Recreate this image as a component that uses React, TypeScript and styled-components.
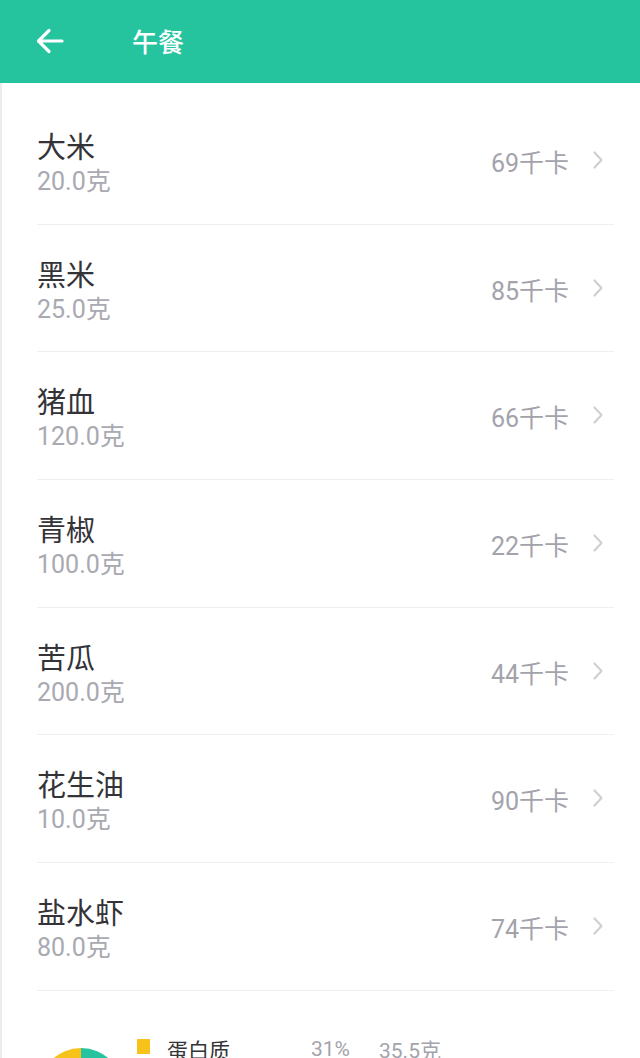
import styled, { createGlobalStyle } from "styled-components";

const GlobalStyle = createGlobalStyle`
  html, body {
    margin: 0;
    padding: 0;
    background: #ffffff;
  }
  body {
    font-family: "Roboto", "Noto Sans CJK SC", sans-serif;
  }
`;

type Food = { name: string; amount: string; kcal: number };

const foods: Food[] = [
  { name: "大米", amount: "20.0克", kcal: 69 },
  { name: "黑米", amount: "25.0克", kcal: 85 },
  { name: "猪血", amount: "120.0克", kcal: 66 },
  { name: "青椒", amount: "100.0克", kcal: 22 },
  { name: "苦瓜", amount: "200.0克", kcal: 44 },
  { name: "花生油", amount: "10.0克", kcal: 90 },
  { name: "盐水虾", amount: "80.0克", kcal: 74 },
];

const App = () => {
  return (
    <StPage>
      <GlobalStyle />
      <StHeader>
        <StBack aria-label="back">
          <svg width="30" height="30" viewBox="0 0 30 30" fill="none">
            <path
              d="M27 15H4M14 4.5L3.5 15L14 25.5"
              stroke="#ffffff"
              strokeWidth="3.2"
              strokeLinecap="round"
              strokeLinejoin="round"
            />
          </svg>
        </StBack>
        <StTitle>午餐</StTitle>
      </StHeader>
      <StBody>
        <StList>
          {foods.map((f) => (
            <StRow key={f.name}>
              <StInfo>
                <StName>{f.name}</StName>
                <StAmount>{f.amount}</StAmount>
              </StInfo>
              <StKcal>{f.kcal}千卡</StKcal>
              <StChevron viewBox="0 0 12 20" width="12" height="20">
                <path
                  d="M2.5 2.5L9.5 10L2.5 17.5"
                  stroke="#cfcfd4"
                  strokeWidth="2.2"
                  fill="none"
                  strokeLinecap="round"
                  strokeLinejoin="round"
                />
              </StChevron>
            </StRow>
          ))}
        </StList>
        <StSummary>
          <StPie viewBox="0 0 84 84" width="84" height="84">
            <path d="M42 42 L42 0 A42 42 0 0 1 84 42 Z" fill="#26c39f" />
            <path d="M42 42 L84 42 A42 42 0 0 1 42 84 Z" fill="#4a90e2" />
            <path d="M42 42 L42 84 A42 42 0 0 1 42 0 Z" fill="#f7c31a" />
            <circle cx="42" cy="42" r="24" fill="#ffffff" />
          </StPie>
          <StLegend>
            <StLegendRow>
              <StSwatch $color="#f7c31a" />
              <StLegendName>蛋白质</StLegendName>
              <StLegendPct>31%</StLegendPct>
              <StLegendVal>35.5克</StLegendVal>
            </StLegendRow>
          </StLegend>
        </StSummary>
      </StBody>
    </StPage>
  );
};

export default App;

const StPage = styled.div`
  width: 640px;
  height: 1058px;
  overflow: hidden;
  display: flex;
  flex-direction: column;
  background: #ffffff;
`;

const StHeader = styled.header`
  height: 83px;
  flex-shrink: 0;
  display: flex;
  align-items: center;
  background: #26c39f;
  padding-left: 35px;
  box-sizing: border-box;
`;

const StBack = styled.div`
  width: 30px;
  height: 30px;
  display: flex;
  margin-right: 67px;
  margin-top: -2px;
`;

const StTitle = styled.h1`
  margin: 0;
  font-family: "Noto Sans CJK SC", sans-serif;
  font-size: 26px;
  font-weight: 500;
  color: #ffffff;
  margin-top: -3px;
`;

const StBody = styled.main`
  flex: 1;
  border-left: 2px solid #ececec;
  padding: 14px 26px 0 35px;
`;

const StList = styled.ul`
  list-style: none;
  margin: 0;
  padding: 0;
`;

const StRow = styled.li`
  height: 127.7px;
  display: flex;
  align-items: center;
  border-bottom: 1.5px solid #efefef;
  padding-top: 5px;
  box-sizing: border-box;
`;

const StInfo = styled.div`
  flex: 1;
  display: flex;
  flex-direction: column;
`;

const StName = styled.span`
  font-family: "Noto Sans CJK SC", sans-serif;
  font-size: 29px;
  line-height: 38px;
  color: #333338;
`;

const StAmount = styled.span`
  font-family: "Roboto", "Noto Sans CJK SC", sans-serif;
  font-size: 25px;
  line-height: 36px;
  color: #a9a9b2;
`;

const StKcal = styled.span`
  font-family: "Roboto", "Noto Sans CJK SC", sans-serif;
  font-size: 25px;
  color: #a3a3ab;
  margin-right: 23px;
  margin-top: -4px;
`;

const StChevron = styled.svg`
  flex-shrink: 0;
  margin-top: -6px;
  margin-right: 10px;
`;

const StSummary = styled.section`
  display: flex;
  align-items: flex-start;
  padding: 45px 0 0 2px;
`;

const StPie = styled.svg`
  flex-shrink: 0;
  margin-top: 12px;
`;

const StLegend = styled.div`
  margin-left: 14px;
  display: flex;
  flex-direction: column;
`;

const StLegendRow = styled.div`
  display: flex;
  align-items: center;
  height: 26px;
`;

const StSwatch = styled.span<{ $color: string }>`
  width: 13px;
  height: 15px;
  background: ${({ $color }) => $color};
  margin-right: 17px;
  margin-top: -4px;
`;

const StLegendName = styled.span`
  font-family: "Noto Sans CJK SC", sans-serif;
  font-size: 21px;
  color: #333338;
  width: 144px;
`;

const StLegendPct = styled.span`
  font-family: "Roboto", "Noto Sans CJK SC", sans-serif;
  font-size: 21px;
  color: #a3a3ab;
  width: 68px;
`;

const StLegendVal = styled.span`
  font-family: "Roboto", "Noto Sans CJK SC", sans-serif;
  font-size: 21px;
  color: #a3a3ab;
`;
